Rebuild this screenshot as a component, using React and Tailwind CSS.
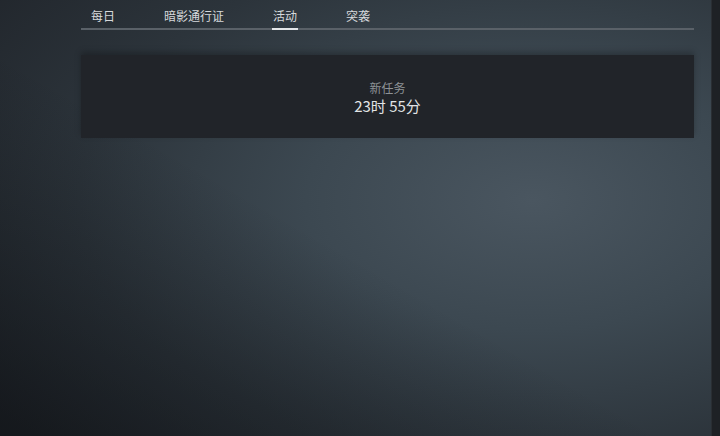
const tabs = ['每日', '暗影通行证', '活动', '突袭'];

export default function App() {
  const active = 2;
  return (
    <div
      className="flex h-[436px] w-[720px] overflow-hidden bg-[linear-gradient(30deg,rgba(10,12,15,0.55)_0%,rgba(10,12,15,0)_45%),radial-gradient(ellipse_90%_85%_at_74%_46%,#4a5660_0%,#3c4851_35%,#2c343b_70%,#22272d_100%)]"
      style={{ fontFamily: '"Noto Sans CJK SC", "Noto Sans", sans-serif' }}
    >
      {/* Main column */}
      <div className="flex min-w-0 flex-1 flex-col pl-[81px] pr-[17px]">
        {/* Tabs */}
        <div className="flex h-[30px] items-stretch gap-[49px] border-b-2 border-[#5a6168] pl-[10px]">
          {tabs.map((t, i) => (
            <div key={t} className="relative flex items-center pt-[3px] text-[12px] leading-none text-[#d6d9dc]">
              {t}
              {i === active && (
                <span className="absolute -bottom-[2px] left-[-1px] right-[-1px] h-[2px] bg-[#e4e6e8]" />
              )}
            </div>
          ))}
        </div>

        {/* Card */}
        <div className="mt-[25px] flex h-[83px] flex-col items-center justify-center bg-[#212429] pt-[2px] shadow-[0_-3px_6px_rgba(0,0,0,0.25)]">
          <div className="text-[12px] leading-[16px] text-[#8d9296]">新任务</div>
          <div className="text-[15px] leading-[20px] text-[#e2e4e6]">23时 55分</div>
        </div>
      </div>

      {/* Right edge strip */}
      <div className="h-full w-[9px] shrink-0 border-l border-[#2a2e33] bg-[#1e2125]" />
    </div>
  );
}
